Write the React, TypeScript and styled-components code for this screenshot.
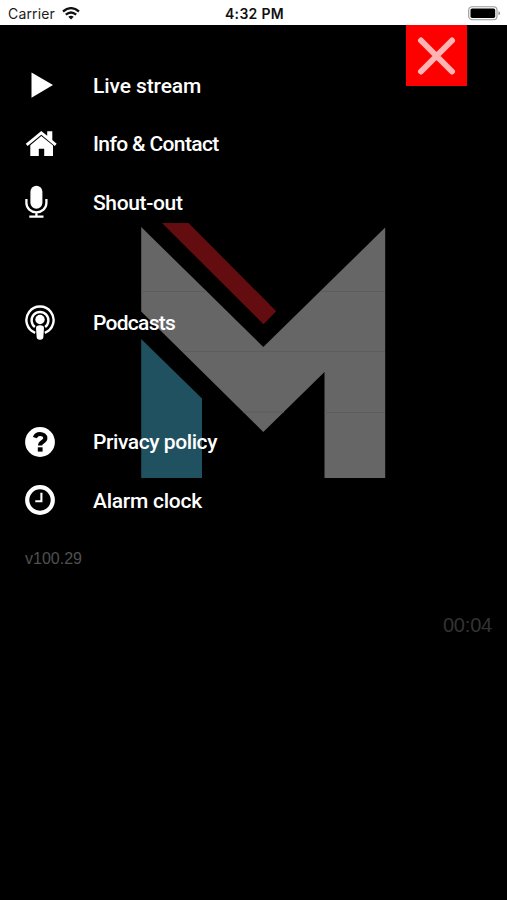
import React from "react";
import styled, { createGlobalStyle } from "styled-components";

const GlobalStyle = createGlobalStyle`
  html, body { margin: 0; background: #000; }
  * { box-sizing: border-box; }
`;

const Screen = styled.div`
  position: relative;
  width: 507px;
  height: 900px;
  overflow: hidden;
  background: #000;
  display: flex;
  flex-direction: column;
`;

const StatusBar = styled.header`
  height: 25px;
  flex: none;
  display: grid;
  grid-template-columns: 1fr auto 1fr;
  align-items: center;
  padding: 2px 6px 0 8px;
  background: #fff;
  color: #1c1c1c;
  font: 400 14px/22px Inter, sans-serif;
`;

const Carrier = styled.div`
  display: flex;
  align-items: center;
  gap: 7px;
  letter-spacing: 0.15px;
`;

const StatusTime = styled.div`
  font-weight: 600;
  font-size: 14px;
  letter-spacing: 0.3px;
  color: #111;
`;

const Battery = styled.svg`
  justify-self: end;
`;

const Watermark = styled.svg`
  position: absolute;
  left: 0;
  top: 0;
  pointer-events: none;
`;

const CloseRow = styled.div`
  position: absolute;
  top: 25px;
  right: 40px;
`;

const CloseButton = styled.button`
  display: block;
  width: 61px;
  height: 61px;
  padding: 0;
  border: 0;
  background: #fe0000;
`;

const Menu = styled.nav`
  position: relative;
  display: flex;
  flex-direction: column;
  gap: 61px;
  padding-top: 31px;
`;

const Group = styled.div`
  display: flex;
  flex-direction: column;
`;

const Item = styled.a`
  display: grid;
  grid-template-columns: 69px 1fr;
  align-items: center;
  height: 58.6px;
  padding-left: 24px;
  color: #fff;
`;

const Icon = styled.svg`
  display: block;
  fill: #fff;
`;

const Label = styled.span<{ $track: number }>`
  padding-top: 1px;
  font: 500 21px/30px Roboto, sans-serif;
  letter-spacing: ${(p) => p.$track}px;
  white-space: nowrap;
`;

const Version = styled.div`
  position: relative;
  padding: 20px 0 0 25px;
  color: #505050;
  font: 400 16px/18px "Liberation Sans", sans-serif;
`;

const Elapsed = styled.div`
  position: relative;
  align-self: flex-end;
  padding: 45px 15px 0 0;
  color: #333;
  font: 400 20px/24px "Liberation Sans", sans-serif;
  letter-spacing: -0.2px;
`;

const PlayIcon = () => (
  <Icon width="32" height="32" viewBox="0 0 32 32"><path d="M7.5 3.5 29 16 7.5 28.8Z" /></Icon>
);
const HomeIcon = () => (
  <Icon width="34" height="32" viewBox="0 0 34 32">
    <path d="M17.3 3 23.2 7.8V3.3H28.3V12L32.7 15.7 30.8 17.9 17.3 6.8 3.6 17.9 1.8 15.7Z" />
    <path d="M17.3 8.1 29 17.6V28H20.2V20.7H14.8V28H6.3V17.3Z" />
  </Icon>
);
const MicIcon = () => (
  <Icon width="32" height="34" viewBox="0 0 32 34">
    <rect x="6.4" y="0.7" width="12" height="23" rx="6" />
    <path d="M2.4 14v4a10 9.3 0 0 0 20 0v-4M12.4 27.5v4M5.3 31.6h14.2" fill="none" stroke="#fff" strokeWidth="2.3" />
  </Icon>
);
const PodcastIcon = () => (
  <Icon width="32" height="36" viewBox="0 0 32 36">
    <g fill="none" stroke="#fff" strokeWidth="2.4">
      <path d="M11.2 28.8A13.6 13.6 0 1 1 20.8 28.8" />
      <path d="M10.9 23A8.4 8.4 0 1 1 21.1 23" />
    </g>
    <circle cx="16" cy="15.5" r="4.7" />
    <path d="M12 24a4 2.7 0 0 1 8 0l-.6 8.5a3.4 3.2 0 0 1-6.8 0Z" />
  </Icon>
);
const HelpIcon = () => (
  <Icon width="32" height="32" viewBox="0 0 32 32">
    <circle cx="16" cy="16" r="14.9" />
    <path d="M10.9 11.6C11.7 9.2 13.5 8 16 8c3 0 5.3 1.7 5.3 4.2 0 3.8-5.2 3.3-5.2 7.3" fill="none" stroke="#000" strokeWidth="4.2" />
    <path d="M13.8 21.3h4.8v4.3h-4.8Z" fill="#000" />
  </Icon>
);
const ClockIcon = () => (
  <Icon width="32" height="32" viewBox="0 0 32 32">
    <circle cx="16" cy="16" r="12.8" fill="none" stroke="#fff" strokeWidth="4.2" />
    <path d="M17.4 8.8V17.2H11.3" fill="none" stroke="#fff" strokeWidth="2.1" />
  </Icon>
);

const groups = [
  [
    { label: "Live stream", track: -0.1, icon: PlayIcon },
    { label: "Info & Contact", track: -0.63, icon: HomeIcon },
    { label: "Shout-out", track: -0.35, icon: MicIcon },
  ],
  [{ label: "Podcasts", track: -0.72, icon: PodcastIcon }],
  [
    { label: "Privacy policy", track: -0.42, icon: HelpIcon },
    { label: "Alarm clock", track: -0.25, icon: ClockIcon },
  ],
];

export default function App() {
  return (
    <>
      <GlobalStyle />
      <Screen>
        <StatusBar>
          <Carrier>
            Carrier
            <svg width="18" height="13" viewBox="0 0 18 13">
              <g fill="none" stroke="#111" strokeWidth="2.3">
                <path d="M1 4.5Q9-2.2 17 4.5" />
                <path d="M3.8 7.7Q9 3.2 14.2 7.7" />
              </g>
              <path d="M6.3 9.7Q9 7.6 11.7 9.7L9 12.5Z" fill="#111" />
            </svg>
          </Carrier>
          <StatusTime>4:32 PM</StatusTime>
          <Battery width="33" height="15" viewBox="0 0 33 15">
            <rect x="0.7" y="0.7" width="28.3" height="13" rx="3.5" fill="#fff" stroke="#999" strokeWidth="1.1" />
            <rect x="2.5" y="2.5" width="24.7" height="9.4" rx="1.6" fill="#000" />
            <path d="M30.5 5.2q1.5.6 1.5 2t-1.5 2Z" fill="#888" />
          </Battery>
        </StatusBar>

        <Watermark width="507" height="500" viewBox="0 0 507 500">
          <path d="M141.2 227 263.3 347 385.2 227.5V478H324.5V372L263.3 432 141.2 311.5Z" fill="#666" />
          <path d="M162 223H188.5L276.2 311.2 263.5 324.2Z" fill="#630d10" />
          <path d="M141.2 339 202 398.5V478H141.2Z" fill="#205160" />
          <path d="M141.2 291.5H207M320 291.5H385M183 351.5H385M243 412H284M324.5 412.5H385" stroke="#5d5d5d" strokeWidth="1" />
        </Watermark>

        <Menu>
          {groups.map((items, i) => (
            <Group key={i}>
              {items.map(({ label, track, icon: Glyph }) => (
                <Item key={label}>
                  <Glyph />
                  <Label $track={track}>{label}</Label>
                </Item>
              ))}
            </Group>
          ))}
        </Menu>
        <Version>v100.29</Version>
        <Elapsed>00:04</Elapsed>

        <CloseRow>
          <CloseButton aria-label="Close">
            <svg width="61" height="61" viewBox="0 0 61 61">
              <path d="M15 15.5 46 46.5M46 15.5 15 46.5" stroke="#ffb3b3" strokeWidth="6" strokeLinecap="round" />
            </svg>
          </CloseButton>
        </CloseRow>
      </Screen>
    </>
  );
}
